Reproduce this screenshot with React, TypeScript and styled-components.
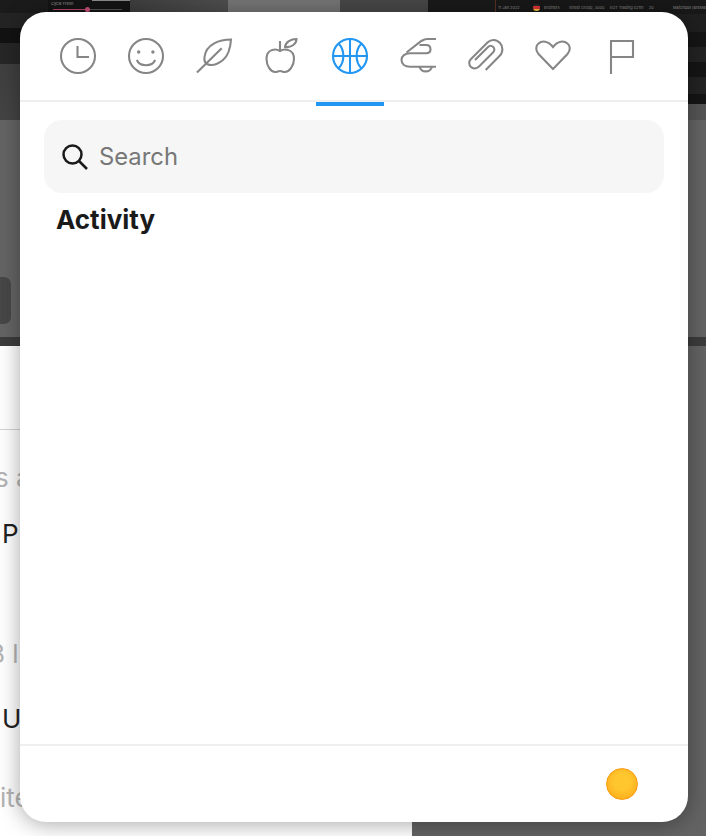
import React from "react";
import styled, { createGlobalStyle } from "styled-components";

const Global = createGlobalStyle`
  html, body { margin: 0; padding: 0; background: #636363; }
  body { font-family: Inter, "Liberation Sans", sans-serif; }
  * { box-sizing: border-box; }
`;

const Page = styled.div`
  position: relative;
  width: 706px;
  height: 836px;
  overflow: hidden;
  display: flex;
  flex-direction: column;
`;

const TopBand = styled.div`
  display: flex;
  height: 120px;
  flex: none;
`;
const LeftStack = styled.div`
  flex: none;
  width: 48px;
  display: flex;
  flex-direction: column;
  background: linear-gradient(#3a3a3a, #444);
`;
const LeftRow = styled.div<{ $h: number; $bg: string }>`
  height: ${(p) => p.$h}px;
  background: ${(p) => p.$bg};
`;
const SliderPanel = styled.div`
  flex: none;
  width: 82px;
  background: linear-gradient(90deg, transparent 44px, #8a8a8a 44px 82px) 0 0 / 100% 1px no-repeat, #141414;
  padding: 1px 0 0 3px;
  color: #9a9a9a;
  font-size: 4px;
  line-height: 5px;
  white-space: nowrap;
`;
const SliderTrack = styled.div`
  position: relative;
  margin: 3px 8px 0 2px;
  height: 1px;
  background: linear-gradient(90deg, #b3446c 0 48%, #555 48% 100%);
`;
const SliderKnob = styled.span`
  position: absolute;
  left: 32px;
  top: -2px;
  width: 5px;
  height: 5px;
  border-radius: 50%;
  background: #c8507c;
`;
const Block = styled.div<{ $w: number; $bg: string }>`
  flex: none;
  width: ${(p) => p.$w}px;
  background: ${(p) => p.$bg};
`;
const TableColumn = styled.div`
  flex: 1;
  min-width: 0;
  display: flex;
  flex-direction: column;
  background: #555;
  border-left: 1px solid #5a3026;
`;
const TableRow = styled.div<{ $bg: string; $h: number }>`
  height: ${(p) => p.$h}px;
  flex: none;
  background: ${(p) => p.$bg};
  display: flex;
  align-items: center;
  color: #8c8c8c;
  font-size: 3.9px;
  white-space: nowrap;
  overflow: hidden;
  padding-left: 2px;
`;
const Cell = styled.span<{ $w: number }>`
  flex: none;
  width: ${(p) => p.$w}px;
`;
const FlagDot = styled.span`
  flex: none;
  width: 7px;
  height: 7px;
  margin-right: 4px;
  border-radius: 50%;
  background: linear-gradient(#2a2a2a 0 33%, #d33 33% 66%, #f0c040 66%);
`;

const GrayBand = styled.div`
  height: 226px;
  flex: none;
  background: #646464;
  padding-top: 157px;
  display: flex;
  flex-direction: column;
`;
const GhostButton = styled.div`
  width: 11px;
  height: 47px;
  background: #474747;
  border-radius: 0 7px 7px 0;
`;
const DarkEdge = styled.div`
  margin-top: 13px;
  height: 9px;
  background: #3c3c3c;
`;

const LowerBand = styled.div`
  flex: 1;
  display: flex;
`;
const WhiteColumn = styled.div`
  width: 412px;
  background: #fff;
  overflow: hidden;
`;
const Rule = styled.div`
  margin-top: 83px;
  height: 1px;
  background: #d4d4d4;
`;
const BackLine = styled.div<{ $gap: number; $muted?: boolean; $shift: number }>`
  margin-top: ${(p) => p.$gap}px;
  margin-left: ${(p) => p.$shift}px;
  height: 30px;
  line-height: 30px;
  font-size: 26px;
  color: ${(p) => (p.$muted ? "#b4b4b4" : "#222")};
  white-space: nowrap;
`;
const GrayColumn = styled.div`
  flex: 1;
  background: #636363;
`;

const Modal = styled.div`
  position: absolute;
  left: 20px;
  top: 12px;
  width: 668px;
  height: 810px;
  background: #fff;
  border-radius: 26px;
  box-shadow: 0 2px 22px rgba(0, 0, 0, 0.35);
  display: flex;
  flex-direction: column;
  overflow: hidden;
`;
const Tabs = styled.div`
  flex: none;
  height: 90px;
  padding: 0 24px;
  display: flex;
  border-bottom: 2px solid #efefef;
`;
const Tab = styled.div<{ $active?: boolean }>`
  position: relative;
  width: 68px;
  padding-top: 26px;
  display: flex;
  justify-content: center;
  align-items: flex-start;
  color: ${(p) => (p.$active ? "#2196f3" : "#868686")};
  &::after {
    content: "";
    display: ${(p) => (p.$active ? "block" : "none")};
    position: absolute;
    left: 0;
    right: 0;
    bottom: -6px;
    height: 4px;
    background: #2196f3;
  }
`;
const Icon = styled.svg.attrs({
  width: 36,
  height: 36,
  viewBox: "0 0 36 36",
  fill: "none",
  stroke: "currentColor",
  strokeWidth: 2.1,
})<{ $dx?: number }>`
  display: block;
  overflow: visible;
  margin-left: ${(p) => (p.$dx ?? 0) * 2}px;
`;
const Body = styled.div`
  flex: 1;
  padding: 18px 24px 0;
`;
const SearchBar = styled.div`
  height: 73px;
  border-radius: 18px;
  background: #f6f6f6;
  display: flex;
  align-items: center;
  padding-left: 18px;
  gap: 11px;
`;
const SearchLabel = styled.span`
  font-size: 23.8px;
  color: #777;
  line-height: 1;
`;
const Heading = styled.h2`
  margin: 11px 0 0 12px;
  font-size: 26px;
  line-height: 32px;
  font-weight: 700;
  color: #1a1a1a;
`;
const Footer = styled.div`
  flex: none;
  height: 78px;
  border-top: 2px solid #efefef;
  display: flex;
  align-items: center;
  justify-content: flex-end;
  padding: 0 50px 0 0;
`;
const ToneDot = styled.div`
  width: 32px;
  height: 32px;
  margin-bottom: 1px;
  border-radius: 50%;
  border: 1px solid #f59a12;
  background: radial-gradient(circle at 50% 42%, #ffc62e 0 35%, #ffb522 68%, #f9a318 100%);
`;

export default function App() {
  return (
    <Page>
      <Global />
      <TopBand>
        <LeftStack>
          <LeftRow $h={13} $bg="#1b1b1b" />
          <LeftRow $h={15} $bg="#242424" />
          <LeftRow $h={15} $bg="#121212" />
          <LeftRow $h={21} $bg="#272727" />
        </LeftStack>
        <SliderPanel>
          Cycle Fresh
          <SliderTrack>
            <SliderKnob />
          </SliderTrack>
        </SliderPanel>
        <Block $w={98} $bg="linear-gradient(90deg,#3e3e3e,#4e4e4e)" />
        <Block $w={112} $bg="#747474" />
        <Block $w={88} $bg="#474747" />
        <Block $w={67} $bg="#1a1a1a" />
        <TableColumn>
          <TableRow $h={14} $bg="#181818">
            <Cell $w={35}>11 Jan 2022</Cell>
            <FlagDot />
            <Cell $w={25}>Brothers</Cell>
            <Cell $w={41}>Street Group, 3000</Cell>
            <Cell $w={39}>EOT Trading u21m</Cell>
            <Cell $w={24}>20</Cell>
            <Cell $w={70}>Matchbull (Bresseur S</Cell>
          </TableRow>
          <TableRow $h={18} $bg="#1f1f1f" />
          <TableRow $h={15} $bg="#151515" />
          <TableRow $h={15} $bg="#232323" />
          <TableRow $h={15} $bg="#151515" />
          <TableRow $h={17} $bg="#232323" />
          <TableRow $h={10} $bg="#151515" />
        </TableColumn>
      </TopBand>
      <GrayBand>
        <GhostButton />
        <DarkEdge />
      </GrayBand>
      <LowerBand>
        <WhiteColumn>
          <Rule />
          <BackLine $gap={33} $muted $shift={-5}>s a</BackLine>
          <BackLine $gap={26} $shift={2}>P</BackLine>
          <BackLine $gap={90} $muted $shift={-12}>B l</BackLine>
          <BackLine $gap={35} $shift={2}>U</BackLine>
          <BackLine $gap={49} $muted $shift={0}>ite</BackLine>
        </WhiteColumn>
        <GrayColumn />
      </LowerBand>
      <Modal>
        <Tabs>
          <Tab>
            <Icon>
              <circle cx="18" cy="18" r="17" />
              <path d="M17.5 8V19H29" />
            </Icon>
          </Tab>
          <Tab>
            <Icon>
              <circle cx="18" cy="18" r="17" />
              <circle cx="10.7" cy="14" r="1.7" fill="currentColor" stroke="none" />
              <circle cx="24.9" cy="14" r="1.7" fill="currentColor" stroke="none" />
              <path d="M8.8 22C12 29 24 29 27.2 22" />
            </Icon>
          </Tab>
          <Tab>
            <Icon>
              <path d="M35 1.5C24 1.5 10 6 8.5 19C8 23 9 25 11 26C16 28.5 22 26 27 22C33 17 34.5 9 35 1.5Z" />
              <path d="M1 34.5L25.7 10.3" />
            </Icon>
          </Tab>
          <Tab>
            <Icon $dx={-1}>
              <path d="M17 13C13 10.5 3.5 10.5 3.5 21C3.5 28 8 34 12 34C14 34 15.5 33 17 33C18.5 33 20 34 22 34C26 34 31 28 31 21C31 10.5 21 10.5 17 13Z" />
              <path d="M17 3V12.5" />
              <path d="M22 9C22.5 4 28 1 33.5 1C33.5 6 28 10 22 9Z" />
            </Icon>
          </Tab>
          <Tab $active>
            <Icon>
              <circle cx="18" cy="18" r="17" />
              <path d="M18 1V35M1 18H35" />
              <path d="M6.5 5.5C13 12 13 24 6.5 30.5" />
              <path d="M29.5 5.5C23 12 23 24 29.5 30.5" />
            </Icon>
          </Tab>
          <Tab>
            <Icon>
              <path d="M36 1H27C24.5 1 23 2 21 3.2L6.5 14.5" />
              <path d="M19.5 7H26C29 7 30.5 9 30.5 11.2C30.5 13.5 29 15.3 26 15.3H10C5 15.3 1.5 18 1.5 22C1.5 26 5 28.7 10 28.7H36" />
              <path d="M19.5 28.7A6.5 6.5 0 0 0 32 28.7" />
            </Icon>
          </Tab>
          <Tab>
            <Icon $dx={-1}>
              <path d="M18.7 32L32.5 18C36.5 14 36 8 33 5C29.5 1 24 1 20.5 4.5L4 21C1.5 23.5 1.8 27 4 29C6 31 9.5 31 12 28.5L26 14.5C27.8 12.7 27.7 10.3 26.2 9C24.7 7.5 22.5 7.5 20.8 9.2L8 22" />
            </Icon>
          </Tab>
          <Tab>
            <Icon $dx={-1}>
              <path d="M18 31L3.5 16C0 12 1 7.5 3.5 5.5C7 2.5 13 2.5 18 9C23 2.5 29 2.5 32.5 5.5C35 7.5 36 12 32.5 16Z" />
            </Icon>
          </Tab>
          <Tab>
            <Icon>
              <path d="M7 36V3H29V19H7" />
            </Icon>
          </Tab>
        </Tabs>
        <Body>
          <SearchBar>
            <svg width="26" height="26" viewBox="0 0 26 26" fill="none" stroke="#1a1a1a" strokeWidth="2.5">
              <circle cx="10.5" cy="10.5" r="9" />
              <path d="M17 17L25 25" />
            </svg>
            <SearchLabel>Search</SearchLabel>
          </SearchBar>
          <Heading>Activity</Heading>
        </Body>
        <Footer>
          <ToneDot />
        </Footer>
      </Modal>
    </Page>
  );
}
